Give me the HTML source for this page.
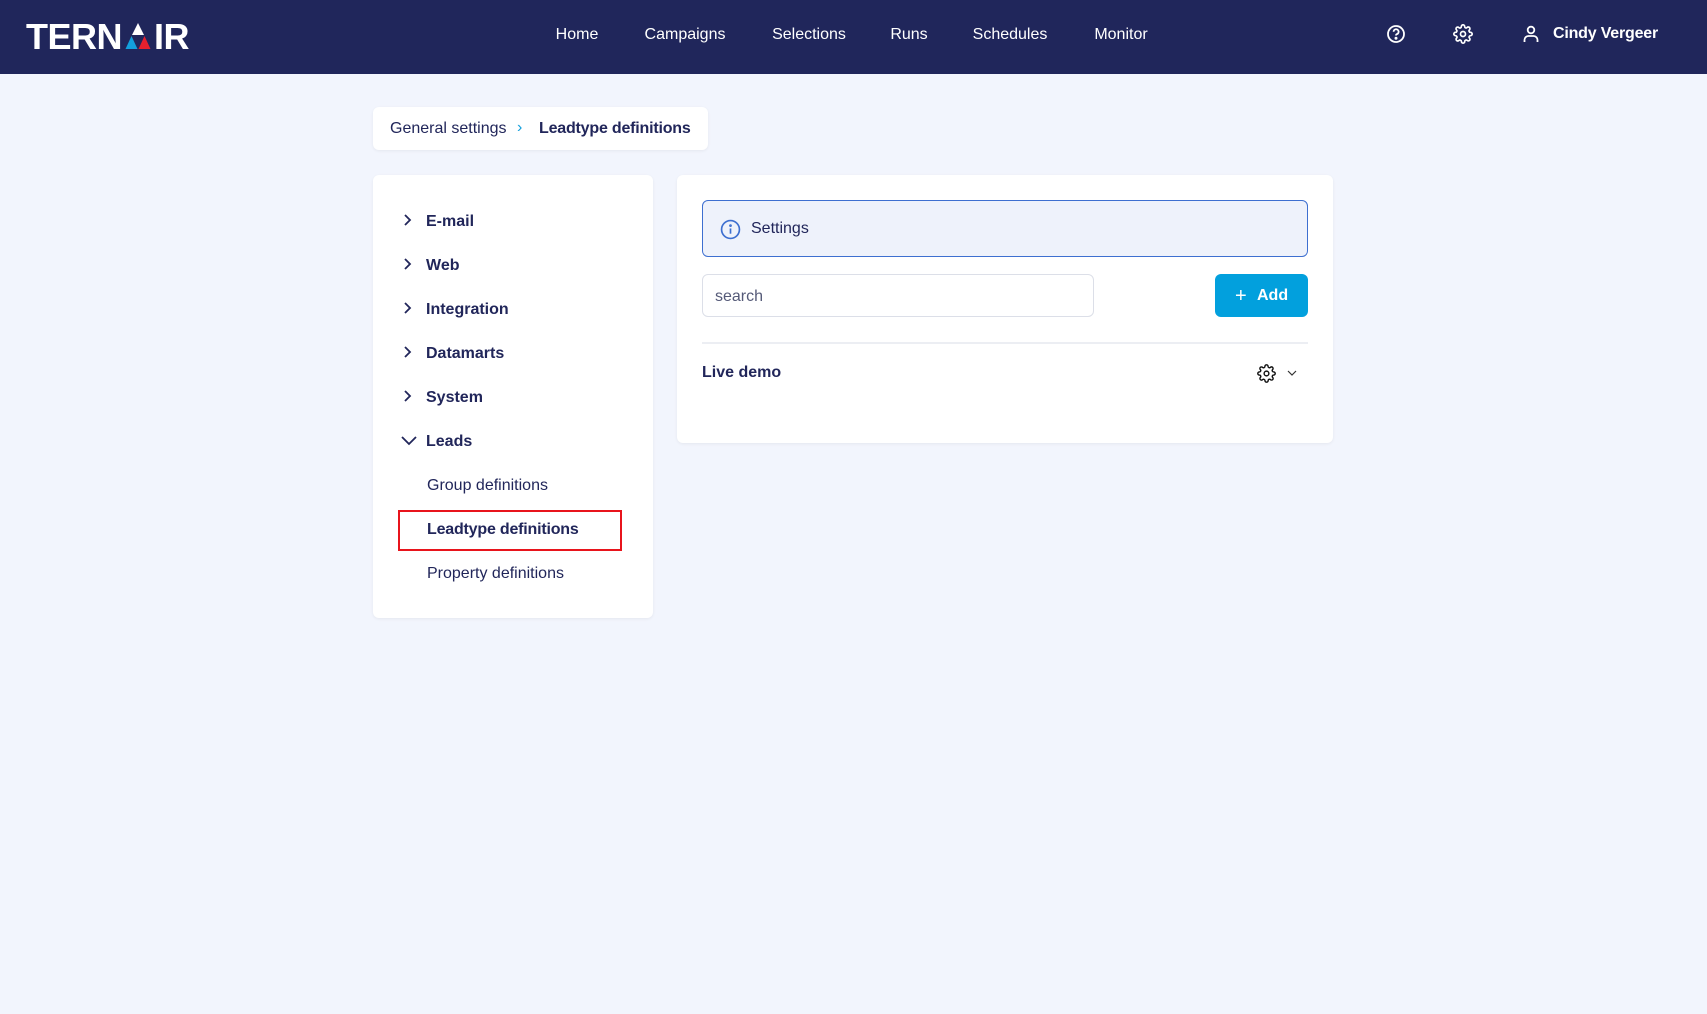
<!DOCTYPE html>
<html><head><meta charset="utf-8"><style>
*{box-sizing:border-box;margin:0;padding:0}
body{width:1707px;height:1014px;background:#f2f5fd;font-family:"Liberation Sans",sans-serif;color:#21265a;position:relative;overflow:hidden}
.hdr{position:absolute;left:0;top:0;width:1707px;height:74px;background:#20265b}
.logo{position:absolute;left:26px;top:17px;color:#fff;font-weight:bold;font-size:36px;letter-spacing:-0.5px;line-height:40px;white-space:nowrap}
.nav{position:absolute;top:26px;color:#fff;font-size:16px;transform:translateX(-50%)}
.card{position:absolute;background:#fff;border-radius:6px;box-shadow:0 1px 3px rgba(0,0,0,.06)}
.mi{position:absolute;left:426px;font-size:16px;font-weight:bold;transform:translateY(-50%);margin-top:2px}
.ch{position:absolute;left:402px}
.sub{position:absolute;left:427px;font-size:16px;transform:translateY(-50%);margin-top:2px}
</style></head><body>
<div class="hdr">
<div class="logo">TERN<span style="display:inline-block;width:30px;height:28px;position:relative;vertical-align:-1px;margin:0 1px"><svg width="30" height="28" viewBox="0 0 30 28" style="position:absolute;left:0;top:0"><polygon points="15,1 21,13 9,13" fill="#fff"/><polygon points="8.5,14 14.5,27 2.5,27" fill="#139fdc"/><polygon points="21.5,14 27.5,27 15.5,27" fill="#e5202e"/></svg></span>IR</div>
<div class="nav" style="left:577px">Home</div>
<div class="nav" style="left:685px">Campaigns</div>
<div class="nav" style="left:809px">Selections</div>
<div class="nav" style="left:909px">Runs</div>
<div class="nav" style="left:1010px">Schedules</div>
<div class="nav" style="left:1121px">Monitor</div>
<svg style="position:absolute;left:1386px;top:24px" width="20" height="20" viewBox="0 0 20 20" fill="none" stroke="#fff" stroke-width="1.8"><circle cx="10" cy="10" r="8"/><path d="M7.6 7.8a2.5 2.5 0 1 1 3.4 2.3c-.7.3-1 .8-1 1.4"/><circle cx="10" cy="14.3" r=".6" fill="#fff"/></svg>
<svg style="position:absolute;left:1453px;top:24px" width="20" height="20" viewBox="0 0 24 24" fill="none" stroke="#fff" stroke-width="2"><circle cx="12" cy="12" r="3"/><path d="M19.4 15a1.65 1.65 0 0 0 .33 1.820l.06.06a2 2 0 1 1-2.83 2.83l-.06-.06a1.65 1.65 0 0 0-1.82-.33 1.650 1.65 0 0 0-1 1.51V21a2 2 0 1 1-4 0v-.09A1.65 1.65 0 0 0 9 19.4a1.65 1.65 0 0 0-1.82.33l-.06.06a2 2 0 1 1-2.83-2.83l.06-.06A1.65 1.65 0 0 0 4.6 15a1.65 1.65 0 0 0-1.51-1H3a2 2 0 1 1 0-4h.09A1.65 1.65 0 0 0 4.6 9a1.65 1.65 0 0 0-.33-1.82l-.06-.06a2 2 0 1 1 2.83-2.83l.06.06A1.65 1.65 0 0 0 9 4.6a1.65 1.65 0 0 0 1-1.51V3a2 2 0 1 1 4 0v.09a1.65 1.65 0 0 0 1 1.51 1.65 1.65 0 0 0 1.82-.33l.06-.06a2 2 0 1 1 2.83 2.83l-.06.06A1.65 1.65 0 0 0 19.4 9a1.65 1.65 0 0 0 1.51 1H21a2 2 0 1 1 0 4h-.09a1.65 1.65 0 0 0-1.51 1z"/></svg>
<svg style="position:absolute;left:1521px;top:24px" width="20" height="20" viewBox="0 0 20 20" fill="none" stroke="#fff" stroke-width="1.8"><circle cx="10" cy="6" r="3.3"/><path d="M3.5 18v-2a4 4 0 0 1 4-4h5a4 4 0 0 1 4 4v2"/></svg>
<div style="position:absolute;left:1553px;top:25px;color:#fff;font-size:16px;font-weight:bold;letter-spacing:-0.2px">Cindy Vergeer</div>
</div>

<div class="card" style="left:373px;top:107px;width:335px;height:43px;font-size:16px">
<span style="position:absolute;left:17px;top:13px">General settings</span>
<span style="position:absolute;left:144px;top:12px;color:#139fdc">›</span>
<span style="position:absolute;left:166px;top:13px;font-weight:bold;letter-spacing:-0.2px">Leadtype definitions</span>
</div>

<div class="card" style="left:373px;top:175px;width:280px;height:443px"></div>
<svg width="0" height="0" style="position:absolute"><defs><path id="cr" d="M3 1l5 5-5 5" fill="none" stroke="#21265a" stroke-width="1.8"/></defs></svg>
<svg class="ch" style="top:214px" width="12" height="12"><use href="#cr"/></svg><div class="mi" style="top:220px">E-mail</div>
<svg class="ch" style="top:258px" width="12" height="12"><use href="#cr"/></svg><div class="mi" style="top:264px">Web</div>
<svg class="ch" style="top:302px" width="12" height="12"><use href="#cr"/></svg><div class="mi" style="top:308px">Integration</div>
<svg class="ch" style="top:346px" width="12" height="12"><use href="#cr"/></svg><div class="mi" style="top:352px">Datamarts</div>
<svg class="ch" style="top:390px" width="12" height="12"><use href="#cr"/></svg><div class="mi" style="top:396px">System</div>
<svg style="position:absolute;left:401px;top:434px" width="16" height="12"><path d="M1 3l7 7 7-7" fill="none" stroke="#21265a" stroke-width="1.8"/></svg><div class="mi" style="top:440px">Leads</div>
<div class="sub" style="top:484px">Group definitions</div>
<div style="position:absolute;left:398px;top:510px;width:224px;height:41px;border:2px solid #e8141c"></div>
<div class="sub" style="top:528px;font-weight:bold;letter-spacing:-0.2px">Leadtype definitions</div>
<div class="sub" style="top:572px">Property definitions</div>

<div class="card" style="left:677px;top:175px;width:656px;height:268px"></div>
<div style="position:absolute;left:702px;top:200px;width:606px;height:57px;background:#eef2fb;border:1px solid #3d6fd0;border-radius:6px">
<svg style="position:absolute;left:17px;top:18px" width="21" height="21" viewBox="0 0 20 20" fill="none" stroke="#3d6fd0" stroke-width="1.6"><circle cx="10" cy="10" r="8.5"/><path d="M10 9v5"/><circle cx="10" cy="6.3" r=".5" fill="#3d6fd0"/></svg>
<span style="position:absolute;left:48px;top:19px;font-size:16px">Settings</span>
</div>
<div style="position:absolute;left:702px;top:274px;width:392px;height:43px;border:1px solid #dcdfe8;border-radius:6px;background:#fff">
<span style="position:absolute;left:12px;top:13px;font-size:16px;color:#555a78">search</span></div>
<div style="position:absolute;left:1215px;top:274px;width:93px;height:43px;background:#02a0dd;border-radius:6px;color:#fff;font-size:16px;font-weight:bold">
<span style="position:absolute;left:20px;top:11px;font-size:20px;font-weight:normal">+</span><span style="position:absolute;left:42px;top:13px">Add</span></div>
<div style="position:absolute;left:702px;top:342px;width:606px;height:2px;background:#eceef3"></div>
<div style="position:absolute;left:702px;top:364px;font-size:16px;font-weight:bold">Live demo</div>
<svg style="position:absolute;left:1257px;top:364px" width="19" height="19" viewBox="0 0 24 24" fill="none" stroke="#111" stroke-width="1.8"><circle cx="12" cy="12" r="3"/><path d="M19.4 15a1.65 1.65 0 0 0 .33 1.82l.06.06a2 2 0 1 1-2.83 2.83l-.06-.06a1.65 1.65 0 0 0-1.82-.33 1.65 1.65 0 0 0-1 1.51V21a2 2 0 1 1-4 0v-.09A1.65 1.65 0 0 0 9 19.4a1.65 1.65 0 0 0-1.82.33l-.06.06a2 2 0 1 1-2.83-2.83l.06-.06A1.65 1.65 0 0 0 4.6 15a1.65 1.65 0 0 0-1.51-1H3a2 2 0 1 1 0-4h.09A1.65 1.65 0 0 0 4.6 9a1.65 1.65 0 0 0-.33-1.82l-.06-.06a2 2 0 1 1 2.83-2.83l.06.06A1.65 1.65 0 0 0 9 4.6a1.65 1.65 0 0 0 1-1.51V3a2 2 0 1 1 4 0v.09a1.65 1.65 0 0 0 1 1.51 1.65 1.65 0 0 0 1.82-.33l.06-.06a2 2 0 1 1 2.83 2.83l-.06.06A1.65 1.65 0 0 0 19.4 9a1.65 1.65 0 0 0 1.51 1H21a2 2 0 1 1 0 4h-.09a1.65 1.65 0 0 0-1.51 1z"/></svg>
<svg style="position:absolute;left:1287px;top:370px" width="10" height="7"><path d="M1 1l4 4 4-4" fill="none" stroke="#333" stroke-width="1.2"/></svg>
</body></html>
